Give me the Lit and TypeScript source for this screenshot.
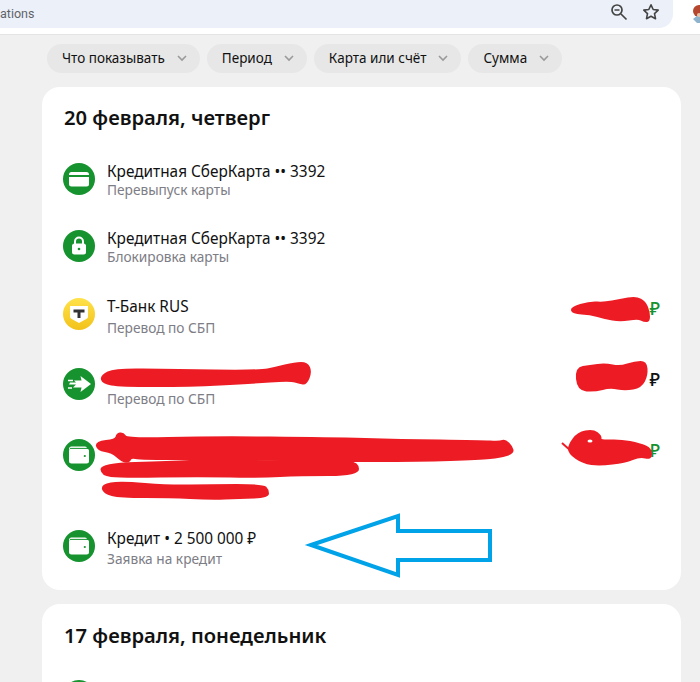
import { LitElement, html, css, svg } from "lit";
import { customElement } from "lit/decorators.js";

const G = "#16922f";

const icons = {
  card: svg`<circle cx="16" cy="16" r="16" fill="${G}"/><rect x="6" y="9" width="20" height="14.5" rx="2.5" fill="#fff"/><rect x="6" y="12" width="20" height="2" fill="${G}"/>`,
  lock: svg`<circle cx="16" cy="16" r="16" fill="${G}"/><path d="M12 14v-2.5a4 4 0 0 1 8 0V14" fill="none" stroke="#fff" stroke-width="2"/><rect x="9" y="13.500" width="14" height="11" rx="2.500" fill="#fff"/><circle cx="16" cy="19" r="1.300" fill="${G}"/>`,
  tbank: svg`<defs><linearGradient id="tb" x1="0" y1="0" x2="0" y2="1"><stop offset="0" stop-color="#ffe24a"/><stop offset="1" stop-color="#f2c21a"/></linearGradient></defs><circle cx="16" cy="16" r="16" fill="url(#tb)"/><path d="M7 8h18v10.500c0 1-.5 1.800-1.300 2.300L16 25l-7.700-4.200C7.500 20.300 7 19.500 7 18.500z" fill="#fff"/><path d="M10.500 11.500h11v3h-4v5.500h-3v-5.500h-4z" fill="#333"/>`,
  arrow: svg`<circle cx="16" cy="16" r="16" fill="${G}"/><path d="M17.500 8 L28 16 L17.500 24 L18.500 19.500 L10 19.500 L13 16.500 L6 16.500 L7 14.500 L13 14.500 L11 12.500 L18.500 12.500z" fill="#fff"/><path d="M5 12.500h5M5 20h4" stroke="#fff" stroke-width="1.600" fill="none"/>`,
  wallet: svg`<circle cx="16" cy="16" r="16" fill="${G}"/><path d="M8.500 7.500h13.500a2 2 0 0 1 2 2V10.500H6V10a2.500 2.500 0 0 1 2.500-2.500z" fill="#fff"/><rect x="6" y="9.500" width="20" height="15" rx="2.500" fill="#fff"/><path d="M7 9.400h18" stroke="${G}" stroke-width="1"/><circle cx="21.800" cy="17" r="1.100" fill="${G}"/>`,
};

const chevron = html`<svg class="chev" width="10" height="7" viewBox="0 0 10 7"><path d="M1 1l4 4 4-4" fill="none" stroke="#9a9a9a" stroke-width="1.600"/></svg>`;

const filters = ["Что показывать", "Период", "Карта или счёт", "Сумма"];

type Row = { icon: keyof typeof icons; kind: string; title?: string; sub?: string; ruble?: string };
const rows: Row[] = [
  { icon: "card", kind: "r1", title: "Кредитная СберКарта •• 3392", sub: "Перевыпуск карты" },
  { icon: "lock", kind: "r2", title: "Кредитная СберКарта •• 3392", sub: "Блокировка карты" },
  { icon: "tbank", kind: "r3 money", title: "Т-Банк RUS", sub: "Перевод по СБП", ruble: "in" },
  { icon: "arrow", kind: "r4 money", title: "", sub: "Перевод по СБП", ruble: "out" },
  { icon: "wallet", kind: "r5 blank", ruble: "in" },
  { icon: "wallet", kind: "r6 last", title: "Кредит • 2 500 000 ₽", sub: "Заявка на кредит" },
];

const blobs: number[][][] = [
  [[571,308],[590,302],[604,303],[620,300],[636,297],[645,302],[649,312],[649,321],[644,321],[638,318],[620,321],[605,318],[590,314],[573,313]],
  [[576,368],[590,366],[605,364],[620,367],[635,362],[646,362],[647,375],[641,387],[625,390],[610,387],[595,391],[578,390]],
  [[569,445],[578,433],[593,430],[601,436],[600,441],[620,440],[640,444],[651,449],[651,459],[640,456],[625,462],[600,465],[583,463],[569,453]],
  [[101,376],[115,369],[170,370],[260,371],[275,368],[295,363],[307,363],[311,372],[306,384],[300,383],[290,380],[250,383],[190,386],[120,386],[103,383]],
  [[96,442],[116,440],[117,434],[123,433],[127,439],[210,437],[330,438],[400,440],[480,441],[500,442],[505,440],[512,447],[513,453],[500,457],[480,459],[420,461],[330,461],[230,459],[140,459],[131,457],[129,462],[122,461],[112,452],[98,450]],
  [[101,464],[170,462],[210,460],[300,462],[340,461],[358,463],[358,475],[300,475],[260,477],[200,476],[120,477],[102,475]],
  [[102,485],[120,482],[170,486],[210,485],[263,485],[268,490],[268,497],[240,498],[210,499],[170,497],[120,497],[104,493]],
];

const smooth = (p: number[][]) => {
  const mid = (a: number[], b: number[]) => [(a[0] + b[0]) / 2, (a[1] + b[1]) / 2];
  const s = mid(p[p.length - 1], p[0]);
  let d = `M${s[0]} ${s[1]}`;
  p.forEach((c, i) => {
    const m = mid(c, p[(i + 1) % p.length]);
    d += `Q${c[0]} ${c[1]} ${m[0]} ${m[1]}`;
  });
  return d + "Z";
};

@customElement("app-root")
export class AppRoot extends LitElement {
  static styles = css`
    :host {
      display: block;
      position: relative;
      height: 682px;
      overflow: hidden;
      background: #f0f0f0;
      font-family: "Noto Sans", "Open Sans", sans-serif;
      color: #111;
    }
    .browser {
      height: 34px;
      background: #fff;
      border-bottom: 1px solid #e4e4e4;
      display: flex;
      justify-content: space-between;
    }
    .address {
      width: 673px;
      height: 28px;
      box-sizing: border-box;
      background: #ecf1f9;
      border-bottom-right-radius: 14px;
      display: flex;
      align-items: center;
      padding-right: 12px;
    }
    .url {
      flex: 1;
      font: 12.500px "Roboto", sans-serif;
      color: #5f6368;
      line-height: 26px;
    }
    .tools {
      display: flex;
      gap: 12px;
      align-items: center;
      margin-bottom: 4px;
    }
    .avatar {
      margin-top: 4px;
    }
    .filters {
      display: flex;
      gap: 7px;
      padding: 9px 0 0 47px;
    }
    .chip {
      height: 29px;
      box-sizing: border-box;
      display: flex;
      align-items: center;
      gap: 12px;
      padding: 0 13px 2px 15px;
      border-radius: 15px;
      background: #e7e7e7;
      font-size: 13.500px;
      white-space: nowrap;
    }
    .chev {
      margin-top: 2px;
    }
    .card {
      background: #fff;
      border-radius: 18px;
      margin: 14px 19px 0 42px;
      padding: 17px 20px 0 22px;
      box-sizing: border-box;
    }
    .card.first {
      height: 503px;
      padding-top: 16px;
    }
    .card.first .rows {
      margin-top: 14px;
    }
    h2 {
      margin: 0;
      font-size: 20.200px;
      font-weight: 600;
      line-height: 28px;
      color: #111;
    }
    .rows {
      margin-top: 13px;
      display: flex;
      flex-direction: column;
      margin-left: -1px;
    }
    .row {
      display: flex;
      align-items: center;
      gap: 12px;
      height: 67px;
    }
    .r3 {
      height: 69px;
    }
    .r4 {
      height: 72px;
    }
    .r5 {
      height: 70px;
    }
    .r6 {
      height: 112px;
    }
    .icon {
      flex: none;
      width: 32px;
      height: 32px;
      display: block;
    }
    .text {
      flex: 1;
      min-width: 0;
      padding-top: 4px;
    }
    .title {
      font-size: 15.350px;
      line-height: 19px;
      min-height: 19px;
      color: #111;
      white-space: nowrap;
    }
    .sub {
      font-size: 13.700px;
      line-height: 18px;
      color: #7d7d85;
    }
    .money .text {
      padding-top: 7px;
    }
    .money .sub {
      margin-top: 3px;
    }
    .last .text {
      padding-top: 5px;
    }
    .last .sub {
      margin-top: 2px;
    }
    .ruble {
      font-size: 18px;
      font-weight: 500;
      align-self: flex-start;
      margin-top: 19px;
      margin-right: 1px;
      line-height: 20px;
    }
    .r4 .ruble {
      margin-top: 21px;
    }
    .r5 .ruble {
      margin-top: 20px;
    }
    .ruble.in {
      color: #16922f;
    }
    .ruble.out {
      color: #111;
    }
    .marks {
      position: absolute;
      left: 0;
      top: 0;
      pointer-events: none;
    }
  `;

  private rowTpl(r: Row) {
    return html`<div class="row ${r.kind}">
      <svg class="icon" viewBox="0 0 32 32">${icons[r.icon]}</svg>
      <div class="text">
        ${r.kind.includes("blank") ? "" : html`<div class="title">${r.title}</div><div class="sub">${r.sub}</div>`}
      </div>
      ${r.ruble ? html`<div class="ruble ${r.ruble}">₽</div>` : ""}
    </div>`;
  }

  render() {
    return html`
      <div class="browser">
        <div class="address">
          <div class="url">ations</div>
          <div class="tools">
            <svg width="20" height="20" viewBox="0 0 20 20" fill="none" stroke="#444" stroke-width="1.700">
              <circle cx="8" cy="8" r="5"/><path d="M12 12l5.500 5.500M5.500 8h5"/>
            </svg>
            <svg width="20" height="20" viewBox="0 0 20 20" fill="none" stroke="#444" stroke-width="1.600" stroke-linejoin="round">
              <path d="M10 2.800l2.200 4.700 5 .6-3.700 3.500 1 5.100-4.500-2.500-4.500 2.500 1-5.100L2.800 8.100l5-.6z"/>
            </svg>
          </div>
        </div>
        <svg class="avatar" width="10" height="20" viewBox="0 0 10 20">
          <circle cx="9" cy="7" r="6" fill="#b5472f"/>
          <path d="M3 15l5-4h2v8H7z" fill="#8fb3cc"/>
          <circle cx="9" cy="11" r="2" fill="#e6c3a8"/>
        </svg>
      </div>
      <div class="filters">
        ${filters.map((f) => html`<div class="chip">${f}${chevron}</div>`)}
      </div>
      <section class="card first">
        <h2>20 февраля, четверг</h2>
        <div class="rows">${rows.map((r) => this.rowTpl(r))}</div>
      </section>
      <section class="card">
        <h2>17 февраля, понедельник</h2>
        <div class="rows">
          <div class="row"><svg class="icon" viewBox="0 0 32 32">${icons.card}</svg></div>
        </div>
      </section>
      <svg class="marks" width="700" height="682" viewBox="0 0 700 682">
        ${blobs.map(
          (p) => svg`<path d=${smooth(p)} fill="#ed1c24" stroke="#ed1c24" stroke-width="2" stroke-linejoin="round"/>`
        )}
        <ellipse cx="590" cy="441" rx="2.500" ry="1.500" fill="#fff"/>
        <path d="M562 443l9 8" stroke="#ed1c24" stroke-width="2"/>
        <path d="M311 545L398 516V531H490V560H398V575Z" fill="none" stroke="#00a2e8" stroke-width="4"/>
      </svg>
    `;
  }
}
